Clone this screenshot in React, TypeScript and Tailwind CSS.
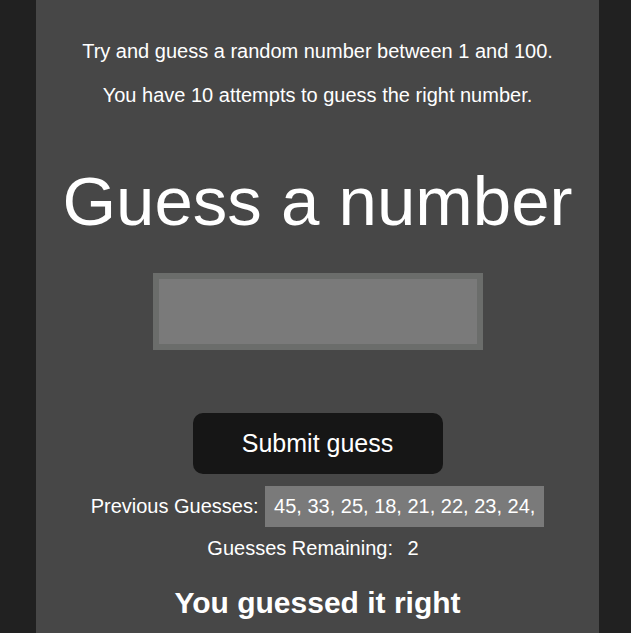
export default function App() {
  const guesses = [45, 33, 25, 18, 21, 22, 23, 24];

  return (
    <div className="min-h-[633px] bg-[#212121] font-['Liberation_Sans',Arial,sans-serif] text-white">
      <div className="ml-[36px] flex min-h-[633px] w-[563px] flex-col items-center bg-[#474747] text-[20px] leading-[23px]">
        <p className="mt-[40px]">Try and guess a random number between 1 and 100.</p>
        <p className="mt-[21px]">You have 10 attempts to guess the right number.</p>

        <h1 className="mt-[55px] text-[69px] leading-[80px]">Guess a number</h1>

        <input
          type="number"
          className="mt-[31px] h-[77px] w-[330px] border-[6px] border-[#6b6d6b] bg-[#7a7a7a] outline-none"
        />

        <button className="mt-[63px] h-[61px] w-[250px] rounded-[10px] bg-[#161616] text-[25px]">
          Submit guess
        </button>

        <div className="mt-[12px] flex items-center">
          <span>Previous Guesses:&nbsp;</span>
          <span className="ml-[1px] bg-[#7a7a7a] px-[9px] py-[9px]">
            {guesses.map((g) => `${g}, `).join("").trim()}
          </span>
        </div>

        <div className="mt-[10px] flex items-center">
          <span>Guesses Remaining:&nbsp;</span>
          <span className="px-[9px]">2</span>
        </div>

        <h2 className="mt-[26px] text-[30px] font-bold leading-[34px]">You guessed it right</h2>
      </div>
    </div>
  );
}
